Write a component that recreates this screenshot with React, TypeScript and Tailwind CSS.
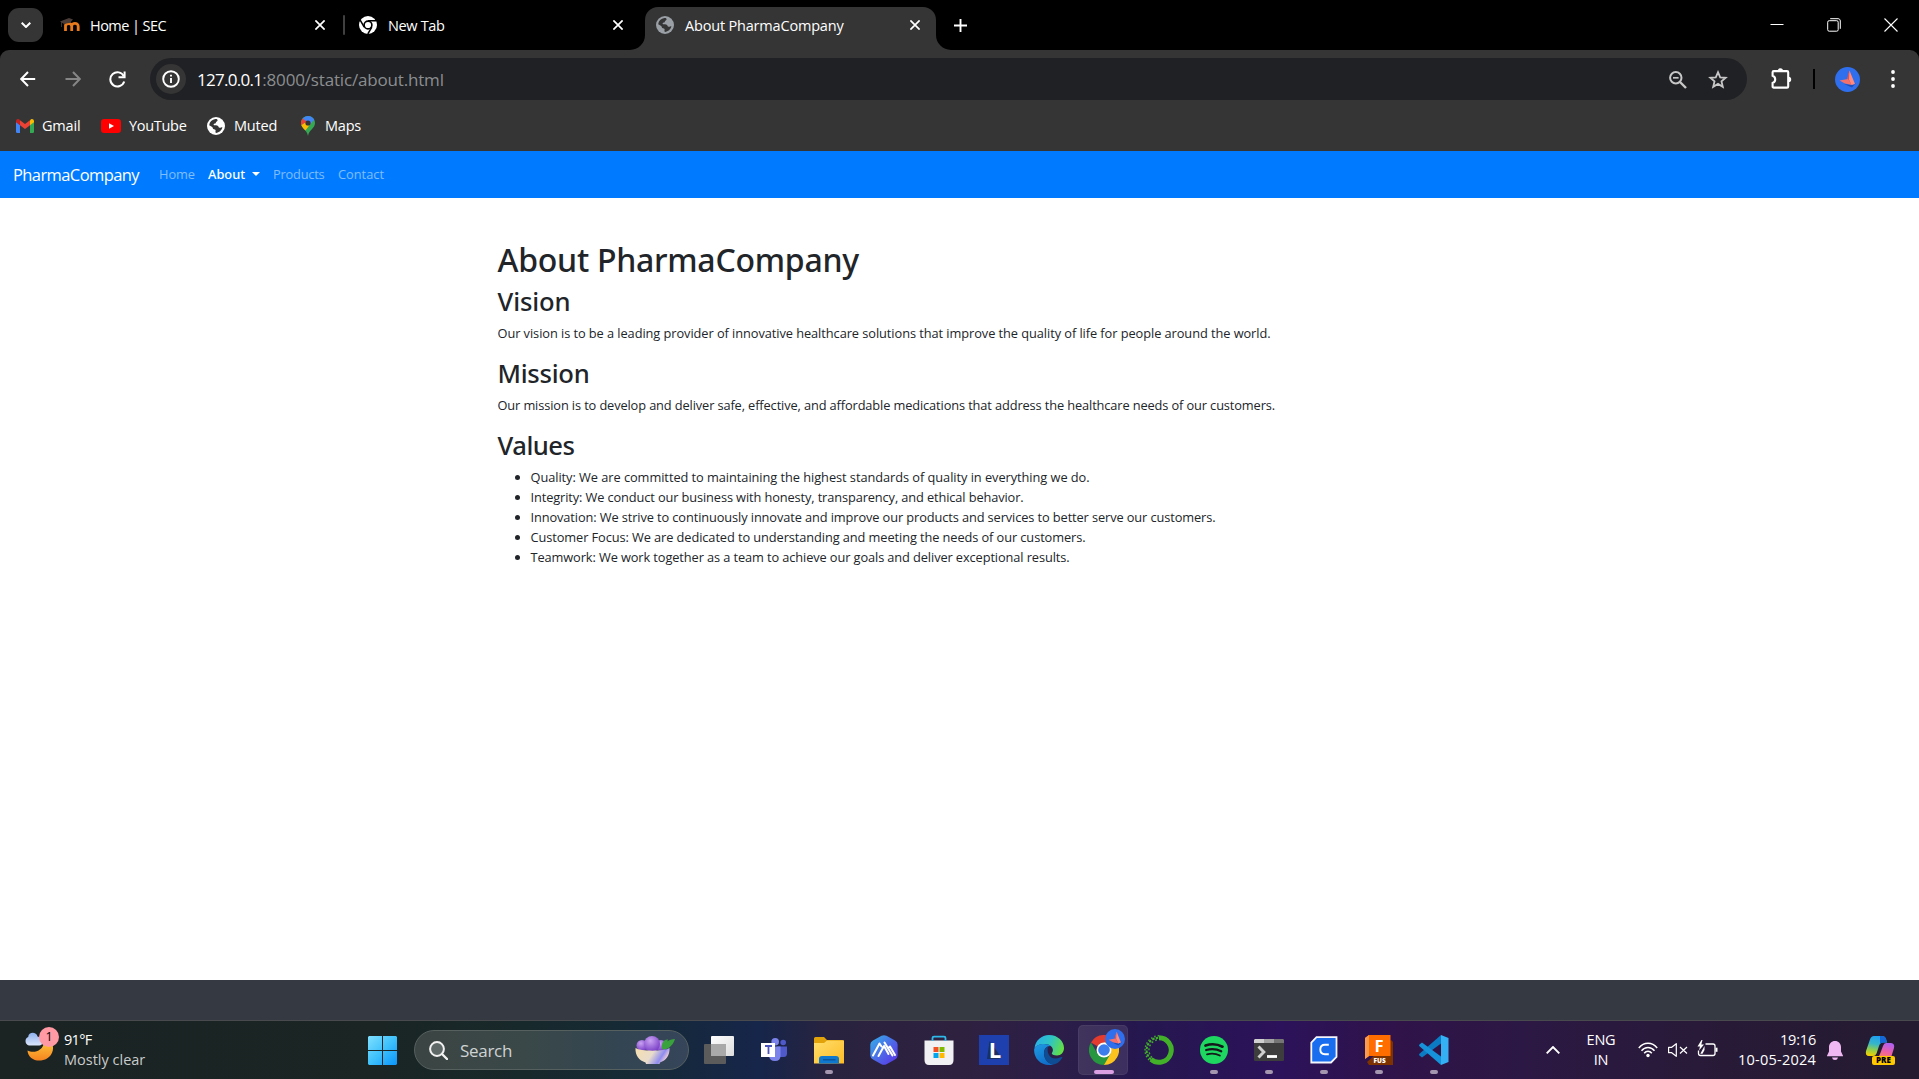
import type { ReactNode } from "react";

type IconProps = { className?: string };

function Globe({ className }: IconProps) {
  return (
    <svg viewBox="0 0 18 18" className={className} fill="none">
      <circle cx="9" cy="9" r="9" fill="currentColor" />
      <path
        d="M2.2 8.2C2.6 5 5 2.6 8.4 2.1C10 2 10.8 2.6 10.6 3.6C10.4 4.6 9 4.6 8.9 5.6C8.9 6.5 8 6.7 7.2 6.7C6.4 6.8 6.6 7.6 7 8.2C8 8.4 10 8.1 11 8.9C11.7 9.6 11.6 10.6 12.6 10.8C13.6 11 14 10.4 15.4 10.3C14.7 13.4 12.2 15.8 9 15.9C8.4 15.4 8.3 14.6 8.6 13.9C8.9 13 8 12.5 7 12.3C5.8 12 5.9 11 5.4 10.2C4.7 9.2 3.4 9 2.2 8.2Z"
        className="fill-[var(--hole)]"
      />
    </svg>
  );
}

function Moodle() {
  return (
    <svg viewBox="0 0 20 16" className="w-5 h-4" fill="none">
      <path d="M5.5 14V7.5M5.5 14V9C5.5 5.9 11.7 5.9 11.7 9.3V14M11.7 9.3C11.7 5.5 18.2 5.5 18.2 9.3V14" stroke="#e8791c" strokeWidth="2.8" />
      <path d="M0 4.5L9 1L13 2.5L10 5.8L4 7Z" fill="#4b3c38" />
      <path d="M1.5 5V10" stroke="#4b3c38" strokeWidth="0.8" />
    </svg>
  );
}

function ChromeMono() {
  return (
    <svg viewBox="0 0 18 18" className="w-[18px] h-[18px]" fill="none">
      <circle cx="9" cy="9" r="9" fill="#fff" />
      <circle cx="9" cy="9" r="3.9" fill="#fff" stroke="#000" strokeWidth="1.6" />
      <path d="M9 4.7H17M12.8 11.1L8.8 18M5.2 11.1L1.2 4.2" stroke="#000" strokeWidth="1.5" />
    </svg>
  );
}

function TabClose() {
  return (
    <svg viewBox="0 0 10 10" className="w-[10px] h-[10px]" stroke="#fff" strokeWidth="1.7">
      <path d="M0.4 0.4L9.6 9.6M9.6 0.4L0.4 9.6" />
    </svg>
  );
}

function Avatar({ className }: IconProps) {
  return (
    <svg viewBox="0 0 25 25" className={className}>
      <circle cx="12.5" cy="12.5" r="12.5" fill="#2f6fed" />
      <path d="M9 17L17 18L21 16L17 20.5Z" fill="#1e4fb8" />
      <path d="M14.5 3.5L20 17L16.5 18L12.5 12Z" fill="#ff8a80" />
      <path d="M14.5 3.5L12 11.5L16.5 18L14 12.5Z" fill="#d9534f" />
      <path d="M4.5 13.5L13 12L17 18L10 16.5Z" fill="#f4716b" />
    </svg>
  );
}

function Tab({ icon, title, titleClass, width, children }: { icon: ReactNode; title: string; titleClass: string; width: string; children?: ReactNode }) {
  return (
    <div className={`relative flex h-[43px] shrink-0 items-start ${width}`}>
      {children}
      <div className="relative flex h-[36px] flex-1 items-center">
        {icon}
        <span className={`mt-[2px] flex-1 whitespace-nowrap text-[14.5px] leading-[20px] text-white ${titleClass}`}>{title}</span>
        <TabClose />
      </div>
    </div>
  );
}

function TabStrip() {
  return (
    <div className="flex h-[50px] items-start bg-black pl-2 pt-[7px]">
      <div className="mt-px flex h-[34px] w-[35px] items-center justify-center rounded-[11px] bg-[#353535]">
        <svg viewBox="0 0 10 6" className="w-[10px] h-[6px]" fill="none" stroke="#fff" strokeWidth="2">
          <path d="M0.7 0.7L5 5L9.3 0.7" />
        </svg>
      </div>
      <Tab icon={<Moodle />} title="Home | SEC" titleClass="ml-[10px] tracking-[-0.562px]" width="ml-[17px] w-[265px]" />
      <div className="ml-[18px] mt-2 h-5 w-[2px] rounded bg-[#404040]" />
      <Tab icon={<ChromeMono />} title="New Tab" titleClass="ml-[11px] tracking-[-0.35px]" width="ml-[14px] w-[264px]" />
      <Tab
        icon={<Globe className="w-[18px] h-[18px] text-[#9aa0a6] [--hole:#353535]" />}
        title="About PharmaCompany"
        titleClass="ml-[11px] tracking-[-0.186px]"
        width="ml-[22px] w-[291px] pl-[11px] pr-4"
      >
        <div className="absolute inset-0 rounded-t-[13px] bg-[#353535]" />
        <svg viewBox="0 0 15 15" className="absolute -left-[15px] bottom-0 w-[15px] h-[15px]">
          <path d="M15 0V15H0A15 15 0 0 0 15 0Z" fill="#353535" />
        </svg>
        <svg viewBox="0 0 15 15" className="absolute -right-[15px] bottom-0 w-[15px] h-[15px]">
          <path d="M0 0V15H15A15 15 0 0 1 0 0Z" fill="#353535" />
        </svg>
      </Tab>
      <svg viewBox="0 0 13 13" className="ml-[18px] mt-[11.5px] w-[13px] h-[13px]" stroke="#fff" strokeWidth="1.9">
        <path d="M6.5 0V13M0 6.5H13" />
      </svg>
      <div className="ml-auto mr-[21px] mt-[11px] flex gap-[43px]">
        <svg viewBox="0 0 14 14" className="w-[14px] h-[14px]" stroke="#fff">
          <path d="M0.5 6.5H13.5" />
        </svg>
        <svg viewBox="0 0 14 14" className="w-[14px] h-[14px]" fill="none" stroke="#fff">
          <rect x="0.7" y="2.7" width="10.5" height="10.5" rx="1.5" />
          <path d="M3.2 0.7H11C12.4 0.7 13.3 1.6 13.3 3V10.8" />
        </svg>
        <svg viewBox="0 0 14 14" className="w-[14px] h-[14px]" stroke="#fff" strokeWidth="1.1">
          <path d="M0.5 0.5L13.5 13.5M13.5 0.5L0.5 13.5" />
        </svg>
      </div>
    </div>
  );
}

function Toolbar() {
  return (
    <div className="flex h-[58px] items-center">
      <svg viewBox="0 0 16 16" className="ml-5 w-4 h-4" fill="none" stroke="#fff" strokeWidth="2">
        <path d="M15.2 8H1.5M8 1L1.2 8L8 15" />
      </svg>
      <svg viewBox="0 0 16 16" className="ml-[29px] w-4 h-4" fill="none" stroke="#858585" strokeWidth="2">
        <path d="M0.5 8H14.5M8 1L14.8 8L8 15" />
      </svg>
      <svg viewBox="0 0 17 17" className="ml-[28px] w-[17px] h-[17px]" fill="none" stroke="#fff" strokeWidth="2">
        <path d="M14.8 5.2A7.1 7.1 0 1 0 15.2 10.5" />
        <path d="M15.6 0.5V6.2H9.5" />
      </svg>
      <div className="ml-[24px] flex h-[42px] w-[1597px] items-center rounded-full bg-[#202124] pl-[6px] text-[17px] leading-[24px]">
        <div className="flex h-[30px] w-[30px] items-center justify-center rounded-full bg-[#353535]">
          <svg viewBox="0 0 18 18" className="w-[18px] h-[18px]" fill="none" stroke="#fff" strokeWidth="1.9">
            <circle cx="9" cy="9" r="7.8" />
            <path d="M9 8V13M9 4.8V6.6" />
          </svg>
        </div>
        <span className="ml-[11px] mt-px tracking-[-0.72px] text-white">127.0.0.1</span>
        <span className="mt-px tracking-[-0.17px] text-[#8b8e91]">:8000/static/about.html</span>
        <svg viewBox="0 0 18 18" className="ml-auto mr-[21px] mt-px w-[18px] h-[18px]" fill="none" stroke="#c7c7c7" strokeWidth="2">
          <circle cx="6.8" cy="6.8" r="5.7" />
          <path d="M11 11L17 17" strokeWidth="2.4" />
          <path d="M4 6.8H9.6" strokeWidth="1.7" />
        </svg>
        <svg viewBox="0 0 20 19" className="mr-[19.5px] w-5 h-[19px]" fill="none" stroke="#c7c7c7" strokeWidth="1.8">
          <path d="M10 2.2L12.2 7.3L17.7 7.8L13.5 11.4L14.8 16.8L10 13.9L5.2 16.8L6.5 11.4L2.3 7.8L7.8 7.3Z" />
        </svg>
      </div>
      <svg viewBox="0 0 21 21" className="ml-[24px] -mt-0.5 w-[21px] h-[21px]" fill="none" stroke="#fff" strokeWidth="2.1">
        <path d="M1.6 4.2Q1.6 3.1 2.7 3.1H16Q17.2 3.1 17.2 4.3V18.4Q17.2 19.6 16 19.6H2.8Q1.6 19.6 1.6 18.4V15Q4.2 14 4.2 11.4Q4.2 8.8 1.6 7.8Z" />
        <path d="M6.8 2.9A2.6 2.6 0 0 1 12 2.9ZM17.6 8.8A2.6 2.6 0 0 1 17.6 14Z" fill="#fff" stroke="none" />
      </svg>
      <div className="ml-[21px] h-5 w-[2px] bg-black" />
      <Avatar className="ml-[20px] w-[25px] h-[25px]" />
      <svg viewBox="0 0 4 18" className="ml-[30.5px] w-1 h-[18px]" fill="#fff">
        <circle cx="2" cy="2" r="1.9" />
        <circle cx="2" cy="9" r="1.9" />
        <circle cx="2" cy="16" r="1.9" />
      </svg>
    </div>
  );
}

function Bookmarks() {
  return (
    <div className="flex h-[43px] items-center pb-[7px] pl-4 text-[14.5px] leading-[20px] text-white">
      <svg viewBox="0 0 18 14" className="w-[18px] h-[14px]">
        <path d="M0 2.5V12.7Q0 14 1.3 14H4V6Z" fill="#4285f4" />
        <path d="M18 2.5V12.7Q18 14 16.7 14H14V6Z" fill="#34a853" />
        <path d="M14 1.3V6.3L18 3.3V2Q17.8 0 16 0Q15 0 14 1.3Z" fill="#fbbc04" />
        <path d="M0 3.3L4 6.3V1.3Q3 0 2 0Q0.2 0 0 2Z" fill="#c5221f" />
        <path d="M4 1.3L9 5L14 1.3V6.3L9 10L4 6.3Z" fill="#ea4335" />
      </svg>
      <span className="ml-[8px] w-[38px] tracking-[-0.2px]">Gmail</span>
      <svg viewBox="0 0 20 14" className="ml-[21px] w-5 h-[14px]">
        <rect width="20" height="14" rx="3.3" fill="#f00" />
        <path d="M8 4.2L13 7L8 9.8Z" fill="#fff" />
      </svg>
      <span className="ml-[8px] w-[58px] tracking-[-0.3px]">YouTube</span>
      <Globe className="ml-[20px] w-[18px] h-[18px] text-white [--hole:#353535]" />
      <span className="ml-[9px] w-[43px] tracking-[-0.2px]">Muted</span>
      <svg viewBox="0 0 14 20" className="ml-[24px] w-[14px] h-[20px]">
        <path d="M7 0C3 0 0 3.1 0 7C0 12.5 6 13.5 7 20C8 13.5 14 12.5 14 7C14 3.1 11 0 7 0Z" fill="#34a853" />
        <path d="M0.3 9C1 11.4 2.9 12.7 4.4 14.4L11 6L7 4Z" fill="#fbbc04" />
        <path d="M1.7 2.5C0.6 3.8 0 5.3 0 7C0 7.8 0.1 8.4 0.3 9L7 5Z" fill="#ea4335" />
        <path d="M1.7 2.5C3 0.9 4.8 0 7 0C9.8 0 12.1 1.5 13.2 3.7L8 9.6L5.4 5.6Z" fill="#4285f4" />
        <circle cx="7" cy="7" r="2.6" fill="#353535" />
      </svg>
      <span className="ml-[10px] tracking-[-0.22px]">Maps</span>
    </div>
  );
}

function Navbar() {
  return (
    <nav className="flex h-[47px] items-center bg-[#007bff] pb-px pl-[13px] text-[12.8px] leading-[20px] text-white/50">
      <span className="w-[146px] text-[16.5px] leading-[25px] tracking-[-0.588px] text-white">PharmaCompany</span>
      <span className="w-[49px] tracking-[-0.042px]">Home</span>
      <span className="flex w-[65px] items-center text-white">
        <span className="w-[38px] font-['Noto_Sans',sans-serif] font-medium">About</span>
        <svg viewBox="0 0 8 4" className="ml-[6px] w-2 h-1" fill="#fff">
          <path d="M0 0H8L4 4Z" />
        </svg>
      </span>
      <span className="w-[65px] tracking-[-0.199px]">Products</span>
      <span>Contact</span>
    </nav>
  );
}

function Heading({ children, className }: { children: string; className: string }) {
  return <h2 className={`mb-[6.4px] pt-px font-['Noto_Sans',sans-serif] text-[25.6px] font-medium leading-[31px] ${className}`}>{children}</h2>;
}

function Content() {
  return (
    <main className="h-[782px] bg-white pl-[497.5px] pt-[40px] text-[12.8px] leading-[20px] text-[#212529]">
      <h1 className="mb-[5px] pt-[2px] font-['Noto_Sans',sans-serif] text-[32px] font-medium leading-[40px] tracking-[-0.26px]">About PharmaCompany</h1>
      <Heading className="tracking-[-0.114px]">Vision</Heading>
      <p className="mb-[13.6px] tracking-[-0.063px]">
        Our vision is to be a leading provider of innovative healthcare solutions that improve the quality of life for people around the world.
      </p>
      <Heading className="tracking-[-0.268px]">Mission</Heading>
      <p className="mb-[13.6px] tracking-[-0.116px]">
        Our mission is to develop and deliver safe, effective, and affordable medications that address the healthcare needs of our customers.
      </p>
      <Heading className="tracking-[-0.492px]">Values</Heading>
      <ul className="list-disc pl-[33px]">
        <li className="tracking-[-0.052px]">Quality: We are committed to maintaining the highest standards of quality in everything we do.</li>
        <li className="tracking-[-0.114px]">Integrity: We conduct our business with honesty, transparency, and ethical behavior.</li>
        <li className="tracking-[-0.104px]">Innovation: We strive to continuously innovate and improve our products and services to better serve our customers.</li>
        <li className="tracking-[-0.087px]">Customer Focus: We are dedicated to understanding and meeting the needs of our customers.</li>
        <li className="tracking-[-0.101px]">Teamwork: We work together as a team to achieve our goals and deliver exceptional results.</li>
      </ul>
    </main>
  );
}

function TaskItem({ children, running, active }: { children: ReactNode; running?: boolean; active?: boolean }) {
  return (
    <div className="relative flex h-[58px] w-[55px] items-center justify-center">
      {active && <div className="absolute left-[2px] top-[4px] h-[50px] w-[50px] rounded-[5px] border border-white/5 bg-white/10" />}
      <div className="relative">{children}</div>
      {running && <div className="absolute bottom-[5px] h-1 w-2 rounded-full bg-[#a596b0]" />}
      {active && <div className="absolute bottom-[5px] h-1 w-5 rounded-full bg-[#dba0e4]" />}
    </div>
  );
}

const box = "block w-[30px] h-[30px]";

function TaskIcons() {
  return (
    <div className="ml-[2px] flex">
      <TaskItem>
        <svg viewBox="0 0 30 30" className={box}>
          <defs>
            <linearGradient id="tv" x1="0" y1="0" x2="1" y2="1"><stop stopColor="#fff" /><stop offset="1" stopColor="#dcdcdc" /></linearGradient>
          </defs>
          <rect x="0" y="9" width="22" height="20" rx="1" fill="#5b5b5b" />
          <rect x="7" y="1" width="23" height="20" rx="1" fill="url(#tv)" />
          <rect x="7" y="9" width="15" height="12" fill="#a9a9a9" />
        </svg>
      </TaskItem>
      <TaskItem>
        <svg viewBox="0 0 30 30" className={box}>
          <circle cx="24.2" cy="7.5" r="2.8" fill="#5059c9" />
          <path d="M18 11.5H28V18.5Q28 22 24.5 22H20Z" fill="#5059c9" />
          <circle cx="16.2" cy="6.7" r="3.8" fill="#7b83eb" />
          <path d="M10 11.5H21.5V20.5Q21.5 26 16 26T10 21Z" fill="#7b83eb" />
          <rect x="2" y="8" width="14" height="14" fill="#fff" />
          <path d="M6 11H13M9.5 11V19" stroke="#4b53bc" strokeWidth="1.8" />
        </svg>
      </TaskItem>
      <TaskItem running>
        <svg viewBox="0 0 30 30" className={box}>
          <defs>
            <linearGradient id="fo" x1="0" y1="0" x2="1" y2="1"><stop stopColor="#ffde6b" /><stop offset="1" stopColor="#fdbc26" /></linearGradient>
          </defs>
          <path d="M0 3.5Q0 2 1.5 2H10L13 5H28.5Q30 5 30 7V12H0Z" fill="#e2a20a" />
          <path d="M0 8H10L13 5.5H30V28.5H0Z" fill="url(#fo)" />
          <path d="M5 28.5V24Q5 21 8 21H22Q25 21 25 24V28.5Z" fill="#0f78cf" />
          <path d="M9 24.8H21.5" stroke="#0a4f91" strokeWidth="1.2" />
        </svg>
      </TaskItem>
      <TaskItem>
        <svg viewBox="0 0 30 30" className={box} fill="none">
          <defs>
            <linearGradient id="ar" x1="0" y1="0" x2="1" y2="1"><stop offset="0.1" stopColor="#35a5e8" /><stop offset="0.55" stopColor="#4f65e8" /><stop offset="1" stopColor="#5a30e6" /></linearGradient>
          </defs>
          <path d="M12.5 0.8Q15 -0.5 17.5 0.8L26 5.6Q28.6 7 28.6 9.5V20.5Q28.6 23 26 24.5L17.5 29.2Q15 30.5 12.5 29.2L4 24.5Q1.3 23 1.3 20.5V9.5Q1.3 7 4 5.6Z" fill="url(#ar)" />
          <path d="M4 20.5L10.5 8.5L12.5 11.5M9.5 21L15 11L19.5 19M15.5 7.5L23.5 20.5M19.8 12.5L21 11.5L26 20" stroke="#fff" strokeWidth="2" strokeLinecap="round" strokeLinejoin="round" />
        </svg>
      </TaskItem>
      <TaskItem>
        <svg viewBox="0 0 30 30" className={box} fill="none">
          <path d="M0.5 5.5H29.5V25Q29.5 30 25 30H5Q0.5 30 0.5 25Z" fill="#f1f1f3" />
          <path d="M8.5 6V3Q8.5 1.7 10 1.7H20Q21.5 1.7 21.5 3V6" stroke="#2fb9ea" strokeWidth="1.8" />
          <path d="M9.5 12H14.5V17H9.5Z" fill="#f25022" />
          <path d="M15.5 12H20.5V17H15.5Z" fill="#7fba00" />
          <path d="M9.5 18H14.5V23H9.5Z" fill="#00a4ef" />
          <path d="M15.5 18H20.5V23H15.5Z" fill="#ffb900" />
        </svg>
      </TaskItem>
      <TaskItem>
        <div className="relative flex h-[30px] w-[30px] items-center justify-center bg-[#1e40ae]">
          <svg viewBox="0 0 30 30" className="absolute w-[30px] h-[30px]" fill="none">
            <path d="M10.5 6L8 24H20L22 22Z" fill="#173065" />
          </svg>
          <span className="relative -mt-[2px] ml-[3px] text-[22px] font-bold leading-none">L</span>
        </div>
      </TaskItem>
      <TaskItem>
        <svg viewBox="0 0 30 30" className={box}>
          <defs>
            <linearGradient id="e1" x1="0" y1="0.3" x2="1" y2="0.6"><stop stopColor="#28b0ea" /><stop offset="0.5" stopColor="#2fc5c4" /><stop offset="1" stopColor="#66e03f" /></linearGradient>
            <linearGradient id="e2" x1="0" y1="0" x2="0.6" y2="1"><stop stopColor="#1f9de3" /><stop offset="1" stopColor="#0f6cc9" /></linearGradient>
          </defs>
          <path d="M0.5 13C1.5 5.5 7.5 0 15 0C24 0 30 6.5 30 13C30 17.5 27 20.5 23 20.5C19.5 20.5 17.5 19.5 17.8 18.3C18.3 17.3 18.9 16.5 18.9 15C18.9 12 15.5 9 10.5 9C5 9 1.5 11.5 0.5 13Z" fill="url(#e1)" />
          <path d="M0.1 15C0.3 11.3 4.5 8.9 10 8.9C13 8.9 15.5 9.6 17 11C13 10.5 10 13.5 10 18C10 24 14 29 20 29.2C18.5 29.7 17 30 15 30C6.5 30 0 23.3 0.1 15Z" fill="url(#e2)" />
          <path d="M10 18C10 14.8 11.5 12.5 14 11.5C12.5 17 15 23.5 21.5 23.5C24.5 23.5 26.5 22.3 27.5 22C28.3 21.8 28.6 22.3 28 23C26 26.5 23 29.2 19 29.3C14 29 10 24 10 18Z" fill="#0e4d93" />
        </svg>
      </TaskItem>
      <TaskItem active>
        <svg viewBox="0 0 30 30" className={box}>
          <path d="M15 15L2 7.5A15 15 0 0 1 28 7.5Z" fill="#e33b2e" />
          <path d="M15 15V30A15 15 0 0 0 28 7.5H15Z" fill="#fcc31e" />
          <path d="M15 15L21.5 18.7L15 30A15 15 0 0 1 2 7.5L8.5 18.7Z" fill="#26963f" />
          <circle cx="15" cy="15" r="7.5" fill="#fff" />
          <circle cx="15" cy="15" r="5.8" fill="#3b7ded" />
        </svg>
        <Avatar className="absolute left-[16px] -top-[6px] w-5 h-5" />
      </TaskItem>
      <TaskItem>
        <svg viewBox="0 0 30 30" className={box} fill="none" stroke="#43b02a">
          <path d="M15 2.7A12.3 12.3 0 1 1 7 24.4" strokeWidth="5" />
          <path d="M7 24.4A12.3 12.3 0 0 1 15 2.7" strokeWidth="2" strokeDasharray="2.5 1.3" />
          <path d="M5 25A14.3 14.3 0 0 1 15 0.8" strokeWidth="1.4" strokeDasharray="1.5 2" />
          <path d="M8 22.5A10.5 10.5 0 0 1 15 4.6" strokeWidth="1.4" strokeDasharray="1.8 2.2" />
        </svg>
      </TaskItem>
      <TaskItem running>
        <svg viewBox="0 0 30 30" className={box} fill="none" stroke="#15181a" strokeLinecap="round">
          <circle cx="15" cy="15" r="14" fill="#1ed760" stroke="none" />
          <path d="M6.5 10.5Q15.5 7.5 23.5 11.7" strokeWidth="2.7" />
          <path d="M7.2 15Q15.2 12.7 22.2 16.3" strokeWidth="2.3" />
          <path d="M8 19.3Q15 17.5 20.8 20.5" strokeWidth="1.9" />
        </svg>
      </TaskItem>
      <TaskItem running>
        <svg viewBox="0 0 30 30" className={box} fill="none">
          <rect y="4" width="30" height="22" rx="1.2" fill="#3d3d3d" />
          <path d="M1 4H10V8H0V5Z" fill="#d0d0d0" />
          <path d="M10 4H20V8H10Z" fill="#a3a3a3" />
          <path d="M20 4H29L30 5V8H20Z" fill="#757575" />
          <path d="M4.5 11.5L9.8 17L4.5 22.5" stroke="#cfcfcf" strokeWidth="3" />
          <path d="M13 21.5H23" stroke="#fff" strokeWidth="2.8" />
        </svg>
      </TaskItem>
      <TaskItem running>
        <svg viewBox="0 0 30 30" className={box} fill="none">
          <path d="M7.5 2.2H27.5V22L22 27.5H2.3V7.5Z" fill="#196ef0" stroke="#f4f6fb" strokeWidth="1.8" />
          <path d="M19.8 9.8H16Q11.3 9.8 11.3 14.5T16 19.2H19.8" stroke="#fff" strokeWidth="1.9" />
        </svg>
      </TaskItem>
      <TaskItem running>
        <svg viewBox="0 0 30 30" className={box} fill="none">
          <path d="M27 5L29 7V30H5L3 27Z" fill="#7d3200" />
          <path d="M1 3L5 0H26.5V21H5L1 24Z" fill="#ff6d00" />
          <path d="M1 3L5 0V21L1 24Z" fill="#ff9a4d" />
        </svg>
        <span className="absolute left-[11px] top-[2px] text-[16.5px] font-bold leading-[18px]">F</span>
        <span className="absolute left-[10px] top-[20.5px] text-[6.5px] font-extrabold leading-[9px]">FUS</span>
      </TaskItem>
      <TaskItem running>
        <svg viewBox="0 0 30 30" className={box}>
          <path d="M22 0L29.5 3V27L22 30Z" fill="#35b0f4" />
          <path d="M22 0V8.5L3 22.5L0.5 20.5Q-0.3 19.5 0.5 18.8Z" fill="#0b7bc4" />
          <path d="M22 30V21.5L3 7.5L0.5 9.5Q-0.3 10.5 0.5 11.2Z" fill="#1592da" />
        </svg>
      </TaskItem>
    </div>
  );
}

function Taskbar() {
  return (
    <div className="flex h-[59px] items-center border-t border-[#484a4d] bg-[linear-gradient(90deg,#1b2323_0px,#1a2524_380px,#18292b_520px,#152a38_650px,#16254a_760px,#29233f_830px,#2e213f_960px,#2b1d4a_1080px,#25174f_1140px,#2c125a_1280px,#2f1349_1400px,#2c1844_1520px,#281a38_1700px,#241b30_1919px)] text-white">
      <div className="relative ml-[24px] h-[58px] w-[40px]">
        <svg viewBox="0 0 36 36" className="mt-[6px] w-9 h-9">
          <defs>
            <linearGradient id="mo" x1="0" y1="0" x2="0" y2="1"><stop stopColor="#ffc83d" /><stop offset="1" stopColor="#f4831f" /></linearGradient>
            <linearGradient id="cl" x1="0" y1="0" x2="0" y2="1"><stop stopColor="#8fb0ee" /><stop offset="1" stopColor="#dbe6fa" /></linearGradient>
          </defs>
          <path d="M3.5 23.5C9 26.5 19 25 20.5 14L27 15C31 20 29 28 23 31.5C15 36 4 33 3.5 23.5Z" fill="url(#mo)" />
          <path d="M5 18.5A4.5 4.5 0 0 1 4.2 10C4.5 4.5 12.5 4.5 13.5 9.5C18 9.5 21 18.5 15.5 18.5Z" fill="url(#cl)" />
        </svg>
        <div className="absolute left-[15px] top-[6px] flex h-5 w-5 items-center justify-center rounded-full bg-[#ff99a4] text-[12.5px] leading-none text-black">1</div>
      </div>
      <div className="w-[304px] text-[14.5px] leading-5">
        <div className="tracking-[-0.694px]">91°F</div>
        <div className="text-[#c9cccc]">Mostly clear</div>
      </div>
      <svg viewBox="0 0 29 29" className="w-[29px] h-[29px]">
        <defs>
          <linearGradient id="wn" gradientUnits="userSpaceOnUse" x1="0" y1="0" x2="29" y2="29"><stop stopColor="#7fe0ff" /><stop offset="0.5" stopColor="#3fc1fb" /><stop offset="1" stopColor="#0a95fb" /></linearGradient>
        </defs>
        <path d="M1 0H14V14H0V1ZM15 0H28L29 1V14H15ZM0 15H14V29H1L0 28ZM15 15H29V28L28 29H15Z" fill="url(#wn)" />
      </svg>
      <div className="ml-[17px] flex h-10 w-[275px] items-center rounded-full border border-[#56605f] bg-[linear-gradient(90deg,#3b4543,#3a4848_40%,#334552_75%,#36455a)] pl-[14px] pr-[13px]">
        <svg viewBox="0 0 19 19" className="w-[19px] h-[19px]" fill="none" stroke="#f1f1f1" strokeWidth="2">
          <circle cx="8" cy="8" r="6.9" fill="#5d6867" />
          <path d="M13 13L18 18" strokeWidth="2.4" strokeLinecap="round" />
        </svg>
        <span className="ml-[12px] mt-px text-[17px] leading-6 tracking-[-0.305px] text-[#cfd3d3]">Search</span>
        <svg viewBox="0 0 40 30" className="ml-auto w-10 h-[30px]">
          <defs>
            <radialGradient id="be" cx="0.4" cy="0.3" r="0.7"><stop stopColor="#c9a2f2" /><stop offset="1" stopColor="#7a3fc6" /></radialGradient>
            <linearGradient id="bo" x1="0" y1="0" x2="1" y2="0.3"><stop stopColor="#f6dfae" /><stop offset="0.55" stopColor="#e8dccb" /><stop offset="0.85" stopColor="#8f8cf0" /><stop offset="1" stopColor="#e6c9d9" /></linearGradient>
          </defs>
          <circle cx="7" cy="10.5" r="5.5" fill="url(#be)" />
          <circle cx="26" cy="10.5" r="5.5" fill="url(#be)" />
          <circle cx="17" cy="9" r="8" fill="url(#be)" />
          <path d="M27 14C26 8 29 4 33 4.5C32 8 30 12 27 14ZM27.5 14.5C29 8 34 4 40 4C38.5 9 34 15 27.5 14.5Z" fill="#3aa23c" />
          <path d="M0.5 13C5 16.5 30 16.5 34.5 13C35 20 31 25.5 25 27.5L24.5 29H11L10.5 27.5C4 25.5 0 20 0.5 13Z" fill="url(#bo)" />
        </svg>
      </div>
      <TaskIcons />
      <svg viewBox="0 0 14 8" className="ml-[85px] w-[14px] h-2" fill="none" stroke="#fff" strokeWidth="1.9">
        <path d="M0.7 7.3L7 1L13.3 7.3" />
      </svg>
      <div className="ml-[25px] w-8 text-center text-[14.5px] leading-5 tracking-[-0.2px]">
        <div>ENG</div>
        <div>IN</div>
      </div>
      <svg viewBox="0 0 20 16" className="ml-[21px] w-5 h-4" fill="none" stroke="#fff" strokeWidth="1.5">
        <path d="M0.8 6C6 -0.3 14 -0.3 19.2 6M3.5 8.7C7 4.4 13 4.4 16.5 8.7M6.2 11.3C8.3 8.6 11.7 8.6 13.8 11.3" />
        <circle cx="10" cy="13.5" r="1.7" fill="#fff" stroke="none" />
      </svg>
      <svg viewBox="0 0 20 14" className="ml-[10px] w-5 h-[14px]" fill="none" stroke="#fff" strokeWidth="1.2">
        <path d="M0.6 4.3H3.7L8.3 0.7V13.3L3.7 9.7H0.6Z" strokeLinejoin="round" />
        <path d="M12 4L19 10.5M19 4L12 10.5" />
      </svg>
      <svg viewBox="0 0 21 17" className="ml-[9px] mr-px -mt-[3px] w-[21px] h-[17px]" fill="none" stroke="#fff" strokeWidth="1.3">
        <path d="M8.5 4H16Q18 4 18 6V13.5Q18 15.5 16 15.5H3.5Q1.5 15.5 1.5 13.5V10.5" />
        <path d="M18.5 7.7H20.5V11.8H18.5Z" fill="#fff" stroke="none" />
        <path d="M4.5 0L0.5 6.5H3L2 10.5L7 4.5H4.3L5.5 0Z" fill="#fff" stroke="none" />
        <path d="M3.3 13.8L7.5 6V10L5.5 13.8Z" fill="#fff" stroke="none" />
      </svg>
      <div className="w-[97px] text-right text-[14.5px] leading-5">
        <div className="tracking-[-0.194px]">19:16</div>
        <div className="tracking-[0.234px]">10-05-2024</div>
      </div>
      <svg viewBox="0 0 16 19" className="ml-[11px] mt-px w-4 h-[19px]" fill="#efb8f2">
        <path d="M8 0C4.5 0 2 2.7 2 6V10.5L0 14.8V15.3H16V14.8L14 10.5V6C14 2.7 11.5 0 8 0Z" />
        <path d="M5 16.5H11Q10.5 19 8 19T5 16.5Z" />
      </svg>
      <div className="relative ml-[22px]">
        <svg viewBox="0 0 30 29" className="w-[30px] h-[29px]">
          <defs>
            <linearGradient id="c1" x1="0.5" y1="0" x2="0.3" y2="1"><stop stopColor="#1fa0f0" /><stop offset="0.4" stopColor="#37b6c8" /><stop offset="0.7" stopColor="#8fcf4c" /><stop offset="1" stopColor="#f5d000" /></linearGradient>
            <linearGradient id="c2" x1="0.6" y1="0" x2="0.3" y2="1"><stop stopColor="#b060f0" /><stop offset="0.5" stopColor="#ee5fa5" /><stop offset="1" stopColor="#fb8a4c" /></linearGradient>
          </defs>
          <path d="M9 0H17Q20 0 21 3L22 6.5H18Q15 6.5 14 10L11.5 17.5Q10.5 20 8 20H4Q0 20 1 15L5 3.5Q6 0 9 0Z" fill="url(#c1)" />
          <path d="M15 0H17Q20 0 21 3L22 6.5H18Q16 6.5 15 8Z" fill="#1566d6" />
          <path d="M21 7H26Q30 7.5 29 12L26.5 20Q26 24 22 24H12L15 18L18 10Q19 7 21 7Z" fill="url(#c2)" />
        </svg>
        <div className="absolute bottom-0 left-[7px] flex h-[9px] w-[23px] items-center justify-center rounded-[2px] bg-[#ffc800] text-[8px] font-extrabold leading-none text-black">PRE</div>
      </div>
    </div>
  );
}

export default function App() {
  return (
    <div className="flex h-[1079px] w-[1919px] flex-col overflow-hidden bg-white font-['Open_Sans','Noto_Sans',sans-serif]">
      <TabStrip />
      <div className="h-[101px] bg-black">
        <div className="h-full rounded-t-[9px] bg-[#353535]">
          <Toolbar />
          <Bookmarks />
        </div>
      </div>
      <Navbar />
      <Content />
      <footer className="h-10 bg-[#353a42]" />
      <Taskbar />
    </div>
  );
}
